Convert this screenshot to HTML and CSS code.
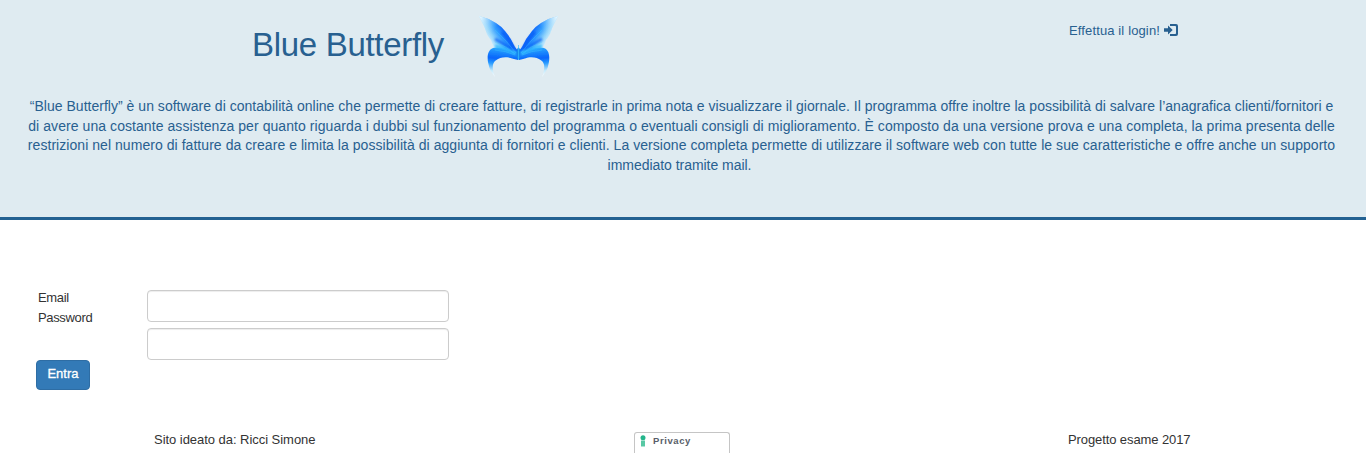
FILE: index.html
```html
<!DOCTYPE html>
<html lang="it">
<head>
<meta charset="utf-8">
<title>Blue Butterfly</title>
<link rel="stylesheet" href="styles.css">
</head>
<body>
<header class="banner">
  <div class="top">
    <h1 class="title">Blue Butterfly</h1>
    <svg class="logo" viewBox="0 0 84 62" aria-hidden="true">
      <defs>
        <linearGradient id="wing" gradientUnits="userSpaceOnUse" x1="9" y1="24" x2="27" y2="13">
          <stop offset="0" stop-color="#e0f4fd"/>
          <stop offset=".3" stop-color="#8fd3fb"/>
          <stop offset=".6" stop-color="#329dff"/>
          <stop offset="1" stop-color="#075dfa"/>
        </linearGradient>
        <linearGradient id="tip" gradientUnits="userSpaceOnUse" x1="1" y1="1" x2="17" y2="14">
          <stop offset="0" stop-color="#f3fbff"/>
          <stop offset="1" stop-color="#a0ddff" stop-opacity="0"/>
        </linearGradient>
        <linearGradient id="lower" gradientUnits="userSpaceOnUse" x1="18" y1="31" x2="15" y2="61">
          <stop offset="0" stop-color="#30b0ff"/>
          <stop offset=".4" stop-color="#0865fb"/>
          <stop offset=".58" stop-color="#299cff"/>
          <stop offset=".82" stop-color="#c5eafb"/>
          <stop offset="1" stop-color="#f4fbff"/>
        </linearGradient>
        <filter id="soft" x="-10%" y="-10%" width="120%" height="120%"><feGaussianBlur stdDeviation=".5"/></filter>
        <filter id="haze" x="-20%" y="-20%" width="140%" height="140%"><feGaussianBlur stdDeviation="1.2"/></filter>
        <g id="half">
          <path fill="url(#wing)" d="M1 1Q10 3 18 8 23 11 27 16 33 23 37 32L41 37V43L36 43 12 36 16 32Q14 29 13 25C9 21 8 16 6 11Z"/>
          <path fill="url(#tip)" d="M1 1Q10 3 18 8L27 16 16 32Q14 29 13 25C9 21 8 16 6 11Z"/>
          <path fill="url(#lower)" d="M40 37C31 35 21 31 15 33 9 35 9 44 10.5 49 11 54 14 58 17 62 14 54 14 49 17 46 23 41 30 42 34 43.5L40 45Z"/>
          <g filter="url(#haze)" fill="none">
            <path stroke="#0757f5" stroke-width="3" opacity=".7" d="M17 24Q27 29 34 35M24 17Q31 25 36 34"/>
            <path stroke="#30baff" stroke-width="2.5" d="M17 31Q28 33 38 39"/>
          </g>
          <path fill="none" stroke="#42c8ff" stroke-width=".7" opacity=".55" d="M38 38Q29 26 17 15M37 39Q28 31 17 27M37 40Q28 36 17 35"/>
        </g>
      </defs>
      <g filter="url(#soft)">
        <use href="#half"/>
        <use href="#half" transform="translate(81 0) scale(-1 1)"/>
        <ellipse cx="40.5" cy="38.5" rx="2" ry="6" fill="#1687ed"/>
        <path d="M40.5 30V45" stroke="#38bfff" stroke-width=".7"/>
      </g>
    </svg>
    <a class="login"><span class="login-text">Effettua il login!</span>
      <svg class="login-icon" viewBox="0 0 14 12" aria-hidden="true"><path d="M0 4.3h4V1.5L8.7 6 4 10.5V7.7H0Z"/><path d="M6 0H12Q14 0 14 2V10Q14 12 12 12H6V10H11.2Q12 10 12 9.2V2.8Q12 2 11.2 2H6Z"/></svg>
    </a>
  </div>
  <p class="intro">
    <span class="line l1">“Blue Butterfly” è un software di contabilità online che permette di creare fatture, di registrarle in prima nota e visualizzare il giornale. Il programma offre inoltre la possibilità di salvare l’anagrafica clienti/fornitori e</span>
    <span class="line l2">di avere una costante assistenza per quanto riguarda i dubbi sul funzionamento del programma o eventuali consigli di miglioramento. È composto da una versione prova e una completa, la prima presenta delle</span>
    <span class="line l3">restrizioni nel numero di fatture da creare e limita la possibilità di aggiunta di fornitori e clienti. La versione completa permette di utilizzare il software web con tutte le sue caratteristiche e offre anche un supporto</span>
    <span class="line l4">immediato tramite mail.</span>
  </p>
</header>
<main class="form">
  <div class="labels"><label for="email">Email</label><label for="password">Password</label></div>
  <div class="fields"><input class="field" id="email" type="text"><input class="field" id="password" type="password"></div>
  <button class="submit">Entra</button>
</main>
<footer class="footer">
  <span class="author">Sito ideato da: Ricci Simone</span>
  <a class="privacy"><svg class="mark" viewBox="0 0 6 12" aria-hidden="true"><circle cx="3" cy="2.8" r="2.5" fill="#24b58b"/><path d="M1 5.5H5V11.5H1Z" fill="#58c8a4"/></svg><span class="privacy-text">Privacy</span></a>
  <span class="project">Progetto esame 2017</span>
</footer>
</body>
</html>
```
FILE: styles.css
```css
* { box-sizing: border-box; }
body { margin: 0; height: 466px; overflow: hidden; background: #fff; color: #333; font: 13px/20px "Liberation Sans", Arial, sans-serif; }
.banner { height: 220px; background: #dfebf1; border-bottom: 3px solid #236192; color: #286090; }
.top { display: flex; height: 97px; align-items: flex-start; }
.title { margin: 26px 0 0 252px; width: 192px; font-size: 33px; line-height: 38px; font-weight: 400; letter-spacing: -.3px; white-space: nowrap; }
.logo { width: 84px; height: 62px; margin: 15px 0 0 34px; overflow: visible; }
.login { display: flex; align-items: center; margin: 21px 0 0 507px; height: 20px; white-space: nowrap; }
.login-text { width: 95px; letter-spacing: .13px; }
.login-icon { width: 14px; height: 12px; margin-top: -2px; fill: #286090; }
.intro { margin: 0; font-size: 14px; line-height: 19.7px; text-align: center; }
.line { display: block; white-space: nowrap; }
.l1 { letter-spacing: .022px; padding-right: 3px; }
.l2 { letter-spacing: .068px; padding-right: 3px; }
.l3 { letter-spacing: .05px; padding-right: 3px; }
.l4 { letter-spacing: -.04px; padding-right: 7px; }
.form { height: 212px; padding: 68px 0 0 36px; display: grid; grid-template: 72px 30px / 111px 302px; }
.labels { display: flex; flex-direction: column; padding-left: 2px; letter-spacing: -.35px; }
.fields { display: flex; flex-direction: column; gap: 6px; padding-top: 2px; }
.field { width: 302px; height: 32px; padding: 6px 12px; border: 1px solid #ccc; border-radius: 4px; background: #fff; box-shadow: inset 0 1px 1px rgba(0,0,0,.075); }
.submit { width: 54px; height: 30px; padding: 0 0 2px; border: 1px solid #2e6da4; border-radius: 4px; background: #337ab7; color: #fff; font: 13px/18px "Liberation Sans", Arial, sans-serif; -webkit-text-stroke: .3px #fff; }
.footer { display: flex; height: 21px; padding-left: 154px; line-height: 16px; white-space: nowrap; }
.author { width: 480px; letter-spacing: -.04px; }
.privacy { display: flex; width: 96px; border: 1px solid #c5c5c5; border-bottom: 0; border-radius: 3px 3px 0 0; padding: 2px 0 0 5px; }
.mark { width: 6px; height: 12px; margin-right: 7px; }
.privacy-text { color: #585e69; font: bold 9.5px/11px "Liberation Sans", Arial, sans-serif; letter-spacing: .6px; }
.project { margin-left: 338px; letter-spacing: -.1px; }
```
